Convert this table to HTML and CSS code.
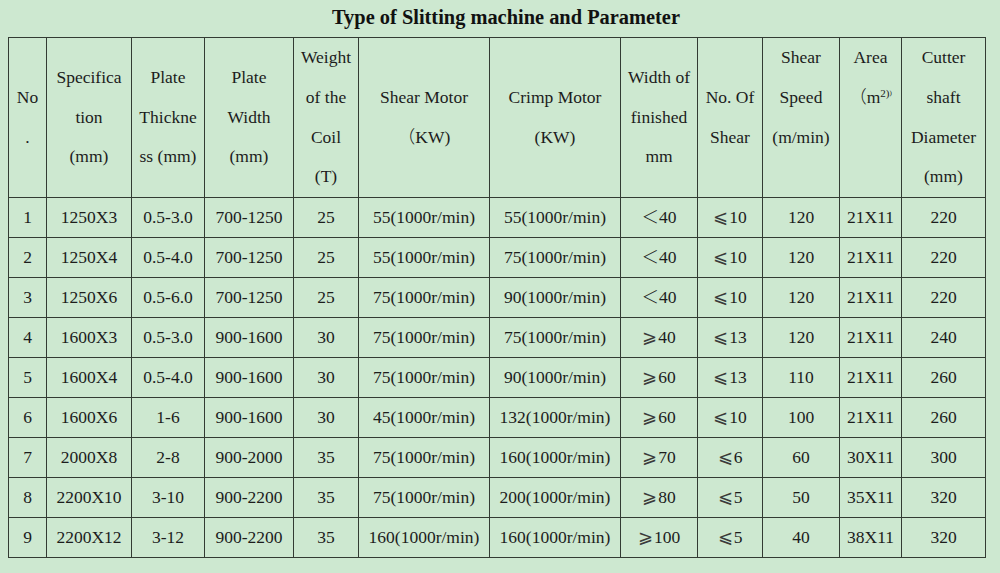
FILE: index.html
```html
<!DOCTYPE html>
<html>
<head>
<meta charset="utf-8">
<link rel="stylesheet" href="styles.css">
</head>
<body>
<div class="page">
  <h1 class="title">Type of Slitting machine and Parameter</h1>
  <table class="params">
    <colgroup>
      <col class="c1"><col class="c2"><col class="c3"><col class="c4"><col class="c5"><col class="c6">
      <col class="c7"><col class="c8"><col class="c9"><col class="c10"><col class="c11"><col class="c12">
    </colgroup>
    <thead>
      <tr>
        <th>No<br>.</th>
        <th>Specifica<br>tion<br>(mm)</th>
        <th>Plate<br>Thickne<br>ss (mm)</th>
        <th>Plate<br>Width<br>(mm)</th>
        <th>Weight<br>of the<br>Coil<br>(T)</th>
        <th>Shear Motor<br><span class="fw">（</span>KW)</th>
        <th>Crimp Motor<br>(KW)</th>
        <th>Width of<br>finished<br>mm</th>
        <th>No. Of<br>Shear</th>
        <th class="top">Shear<br>Speed<br>(m/min)</th>
        <th class="top">Area<br><span class="fw">（</span>m<sup>2)</sup><sup class="tiny">)</sup></th>
        <th>Cutter<br>shaft<br>Diameter<br>(mm)</th>
      </tr>
    </thead>
    <tbody>
      <tr><td>1</td><td>1250X3</td><td>0.5-3.0</td><td>700-1250</td><td>25</td><td>55(1000r/min)</td><td>55(1000r/min)</td><td><span class="fw">＜</span>40</td><td><span class="sym">⩽</span>10</td><td>120</td><td>21X11</td><td>220</td></tr>
      <tr><td>2</td><td>1250X4</td><td>0.5-4.0</td><td>700-1250</td><td>25</td><td>55(1000r/min)</td><td>75(1000r/min)</td><td><span class="fw">＜</span>40</td><td><span class="sym">⩽</span>10</td><td>120</td><td>21X11</td><td>220</td></tr>
      <tr><td>3</td><td>1250X6</td><td>0.5-6.0</td><td>700-1250</td><td>25</td><td>75(1000r/min)</td><td>90(1000r/min)</td><td><span class="fw">＜</span>40</td><td><span class="sym">⩽</span>10</td><td>120</td><td>21X11</td><td>220</td></tr>
      <tr><td>4</td><td>1600X3</td><td>0.5-3.0</td><td>900-1600</td><td>30</td><td>75(1000r/min)</td><td>75(1000r/min)</td><td><span class="sym">⩾</span>40</td><td><span class="sym">⩽</span>13</td><td>120</td><td>21X11</td><td>240</td></tr>
      <tr><td>5</td><td>1600X4</td><td>0.5-4.0</td><td>900-1600</td><td>30</td><td>75(1000r/min)</td><td>90(1000r/min)</td><td><span class="sym">⩾</span>60</td><td><span class="sym">⩽</span>13</td><td>110</td><td>21X11</td><td>260</td></tr>
      <tr><td>6</td><td>1600X6</td><td>1-6</td><td>900-1600</td><td>30</td><td>45(1000r/min)</td><td>132(1000r/min)</td><td><span class="sym">⩾</span>60</td><td><span class="sym">⩽</span>10</td><td>100</td><td>21X11</td><td>260</td></tr>
      <tr><td>7</td><td>2000X8</td><td>2-8</td><td>900-2000</td><td>35</td><td>75(1000r/min)</td><td>160(1000r/min)</td><td><span class="sym">⩾</span>70</td><td><span class="sym">⩽</span>6</td><td>60</td><td>30X11</td><td>300</td></tr>
      <tr><td>8</td><td>2200X10</td><td>3-10</td><td>900-2200</td><td>35</td><td>75(1000r/min)</td><td>200(1000r/min)</td><td><span class="sym">⩾</span>80</td><td><span class="sym">⩽</span>5</td><td>50</td><td>35X11</td><td>320</td></tr>
      <tr><td>9</td><td>2200X12</td><td>3-12</td><td>900-2200</td><td>35</td><td>160(1000r/min)</td><td>160(1000r/min)</td><td><span class="sym">⩾</span>100</td><td><span class="sym">⩽</span>5</td><td>40</td><td>38X11</td><td>320</td></tr>
    </tbody>
  </table>
</div>
</body>
</html>
```
FILE: styles.css
```css
html, body {
  margin: 0;
  padding: 0;
  background: #cde8d0;
}
.page {
  width: 1000px;
  height: 573px;
  padding-left: 8px;
  box-sizing: border-box;
  font-family: "Liberation Serif", "Times New Roman", "Noto Sans CJK SC", serif;
  color: #1c1c1c;
}
.title {
  margin: 0;
  height: 37px;
  line-height: 35px;
  font-size: 20.4px;
  font-weight: bold;
  text-align: center;
  padding-left: 4px;
  color: #111;
}
.params {
  border-collapse: collapse;
  table-layout: fixed;
  width: 978px;
  font-size: 17.5px;
}
.c1 { width: 38px; }
.c2 { width: 85px; }
.c3 { width: 73px; }
.c4 { width: 89px; }
.c5 { width: 65px; }
.c6 { width: 131px; }
.c7 { width: 131px; }
.c8 { width: 77px; }
.c9 { width: 65px; }
.c10 { width: 77px; }
.c11 { width: 62px; }
.c12 { width: 84px; }
.params th, .params td {
  border: 1px solid #333b33;
  padding: 0;
  text-align: center;
  white-space: nowrap;
  font-weight: normal;
}
.params th {
  height: 159px;
  line-height: 39.75px;
  vertical-align: middle;
}
.params th.top {
  vertical-align: top;
}
.params td {
  height: 37px;
  padding-bottom: 2px;
  line-height: 22px;
  vertical-align: middle;
}
.fw {
  font-family: "Noto Sans CJK SC", sans-serif;
  font-weight: 300;
  line-height: 1;
}
.sym {
  font-family: "DejaVu Sans", serif;
  font-weight: 200;
  font-size: 18px;
  line-height: 1;
  margin-right: 1px;
  color: #3a3a3a;
}
sup {
  font-size: 11px;
  line-height: 0;
  vertical-align: 6px;
}
sup.tiny {
  font-size: 7px;
  vertical-align: 8px;
}
```
